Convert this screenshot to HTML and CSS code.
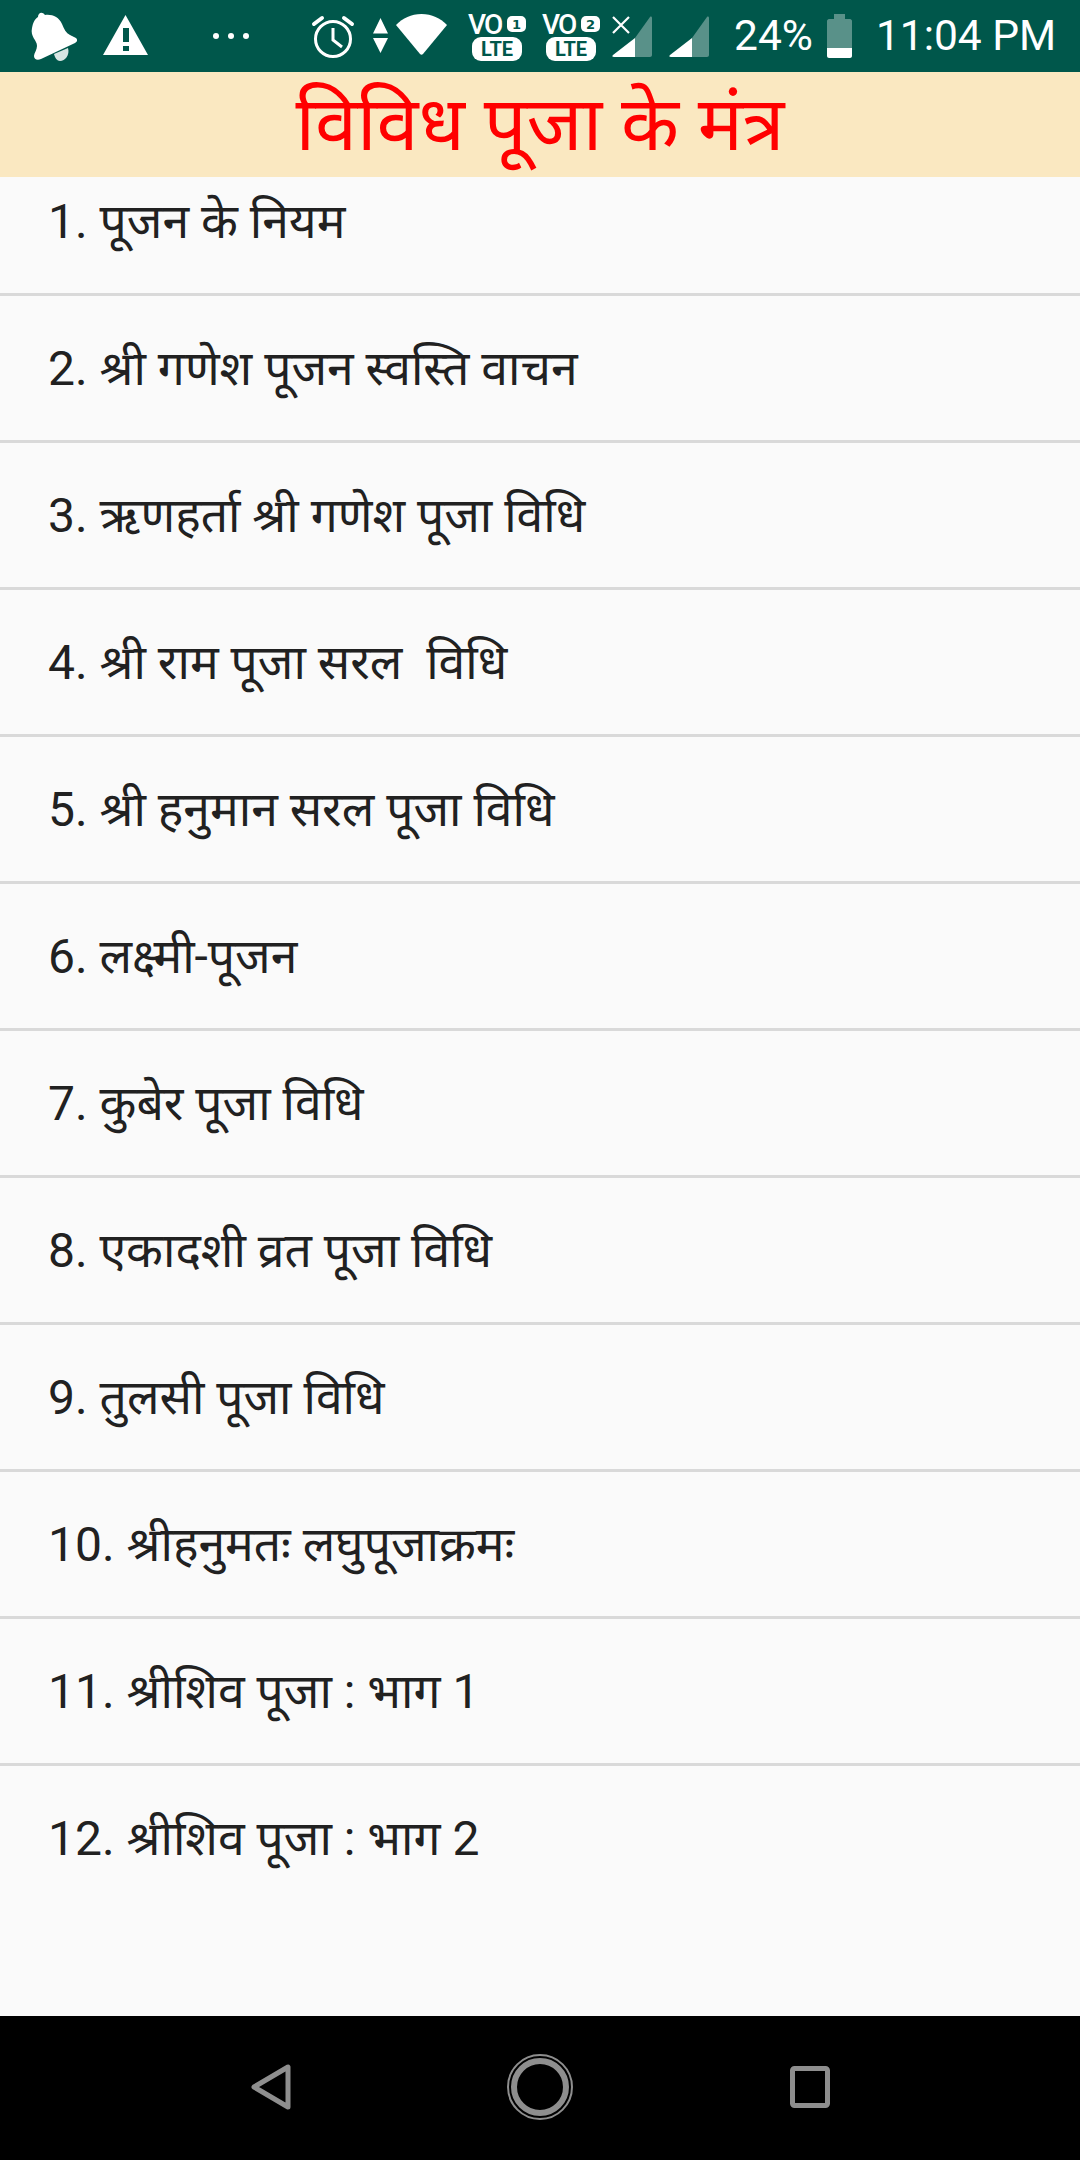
FILE: index.html
```html
<!DOCTYPE html>
<html lang="hi">
<head>
<meta charset="utf-8">
<title>विविध पूजा के मंत्र</title>
<link rel="stylesheet" href="styles.css">
</head>
<body>
<div class="phone">
  <div class="status">
    <svg class="ic bell" viewBox="0 0 47 51"><path fill="#fff" d="M2 18C3 12 5 9 8 7 8 3 12 1 15 5c7-1 14 2 17 9 2 5 4 9 8 11l6 3c2 2 1 4-1 5L11 49c-4 2-7 0-7-3 0-3 3-6 3-10 0-6-7-9-5-18z"/><path fill="#fff" opacity=".85" d="M24 44l14-6c2 7-3 13-8 13-3 0-5-3-6-7z"/></svg>
    <svg class="ic warn" viewBox="0 0 45 40"><path fill="#fff" fill-rule="evenodd" d="M22.500 0L45 40H0zM20 13v14h6V13zm0 18v5h6v-5z"/></svg>
    <svg class="ic dots" viewBox="0 0 36 6"><circle cx="3" cy="3" r="3" fill="#fff"/><circle cx="18" cy="3" r="3" fill="#fff"/><circle cx="33" cy="3" r="3" fill="#fff"/></svg>
    <svg class="ic alarm" viewBox="0 0 42 43"><circle cx="21" cy="24" r="17.500" fill="none" stroke="#fff" stroke-width="3"/><path fill="none" stroke="#fff" stroke-width="3" d="M21 13v12l9 7"/><path fill="none" stroke="#fff" stroke-width="4" stroke-linecap="round" d="M2 9l8-6M40 9l-8-6"/></svg>
    <svg class="ic arrows" viewBox="0 0 15 35"><path fill="#fff" d="M7.500 0L15 15.500H0zM0 20h15L7.500 35z"/></svg>
    <svg class="ic wifi" viewBox="0 0 51 41"><path fill="#fff" d="M0 11C7 4 15 0 25.500 0S44 4 51 11L27 40c-1 1-2 1-3 0z"/></svg>
    <svg class="ic vo vo1" viewBox="0 0 58 49"><text class="vot" x="0" y="21">VO</text><rect x="39" y="3" width="19" height="16" rx="5" fill="#fff"/><text class="von" x="48.500" y="16">1</text><rect x="4" y="24" width="50" height="24" rx="9" fill="#fff"/><text class="lte" x="29" y="43">LTE</text></svg>
    <svg class="ic vo vo2" viewBox="0 0 58 49"><text class="vot" x="0" y="21">VO</text><rect x="39" y="3" width="19" height="16" rx="5" fill="#fff"/><text class="von" x="48.500" y="16">2</text><rect x="4" y="24" width="50" height="24" rx="9" fill="#fff"/><text class="lte" x="29" y="43">LTE</text></svg>
    <svg class="ic sig sig1" viewBox="0 0 40 41"><path fill="#fff" opacity=".35" d="M23 22L38 1c1-1 2 0 2 1v37c0 1-1 2-2 2H23z"/><path fill="#fff" d="M23 22v19H2c-2 0-2-1-1-2z"/><path fill="none" stroke="#fff" stroke-width="2.200" d="M1 1l16 16M17 1L1 17"/></svg>
    <svg class="ic sig sig2" viewBox="0 0 40 41"><path fill="#fff" opacity=".35" d="M23 22L38 1c1-1 2 0 2 1v37c0 1-1 2-2 2H23z"/><path fill="#fff" d="M23 22v19H2c-2 0-2-1-1-2z"/></svg>
    <span class="pct">24%</span>
    <svg class="ic batt" viewBox="0 0 25 44"><path fill="#fff" opacity=".35" d="M7 0h11v5h5c1 0 2 1 2 2v27H0V7c0-1 1-2 2-2h5z"/><path fill="#fff" d="M0 34h25v8c0 1-1 2-2 2H2c-1 0-2-1-2-2z"/></svg>
    <span class="time">11:04 PM</span>
  </div>
  <header class="title"><h1>विविध पूजा के मंत्र</h1></header>
  <ul class="list">
    <li class="row first">1. पूजन के नियम</li>
    <li class="row">2. श्री गणेश पूजन स्वस्ति वाचन</li>
    <li class="row">3. ऋणहर्ता श्री गणेश पूजा विधि</li>
    <li class="row">4. श्री राम पूजा सरल &nbsp;विधि</li>
    <li class="row">5. श्री हनुमान सरल पूजा विधि</li>
    <li class="row">6. लक्ष्मी-पूजन</li>
    <li class="row">7. कुबेर पूजा विधि</li>
    <li class="row">8. एकादशी व्रत पूजा विधि</li>
    <li class="row">9. तुलसी पूजा विधि</li>
    <li class="row">10. श्रीहनुमतः लघुपूजाक्रमः</li>
    <li class="row">11. श्रीशिव पूजा : भाग 1</li>
    <li class="row last">12. श्रीशिव पूजा : भाग 2</li>
  </ul>
  <nav class="nav">
    <svg class="back" viewBox="0 0 40 46"><path fill="none" stroke="#8e8e8e" stroke-width="5" stroke-linejoin="round" d="M3 23L37 3v40z"/></svg>
    <svg class="home" viewBox="0 0 66 66"><circle cx="33" cy="33" r="32" fill="none" stroke="#8e8e8e" stroke-width="2"/><circle cx="33" cy="33" r="26" fill="none" stroke="#8e8e8e" stroke-width="6"/></svg>
    <svg class="recent" viewBox="0 0 40 42"><rect x="2.500" y="2.500" width="35" height="37" rx="2" fill="none" stroke="#8e8e8e" stroke-width="5"/></svg>
  </nav>
</div>
</body>
</html>
```

FILE: styles.css
```css
* { box-sizing: border-box; }
html, body { margin: 0; padding: 0; }
body { width: 1080px; height: 2160px; overflow: hidden; background: #fafafa; font-family: Roboto, "Noto Sans", "Noto Sans Devanagari", sans-serif; }
.phone { width: 1080px; height: 2160px; display: flex; flex-direction: column; }

.status { height: 72px; flex: none; background: #00574b; color: #fff; display: flex; align-items: flex-start; }
.ic { display: block; flex: none; overflow: visible; }
.bell { width: 47px; height: 51px; margin: 10px 0 0 30px; }
.warn { width: 45px; height: 40px; margin: 15px 0 0 26px; }
.dots { width: 36px; height: 6px; margin: 33px 0 0 65px; }
.alarm { width: 42px; height: 43px; margin: 15px 0 0 63px; }
.arrows { width: 15px; height: 35px; margin: 18px 0 0 19px; }
.wifi { width: 51px; height: 41px; margin: 14px 0 0 8px; }
.vo { width: 58px; height: 49px; margin-top: 13px; }
.vo1 { margin-left: 21px; }
.vo2 { margin-left: 16px; }
.sig { width: 40px; height: 41px; margin-top: 16px; }
.sig1 { margin-left: 12px; }
.sig2 { margin-left: 17px; }
.pct, .time { font-size: 42.500px; line-height: 72px; white-space: nowrap; }
.pct { margin-left: 25px; }
.batt { width: 25px; height: 44px; margin: 14px 0 0 14px; }
.time { margin-left: 24px; }
.vot { font: 500 28px Roboto, sans-serif; fill: #fff; letter-spacing: -2px; }
.von { font: 700 13px "DejaVu Sans", sans-serif; fill: #00574b; text-anchor: middle; }
.lte { font: 700 20px Roboto, sans-serif; fill: #00574b; text-anchor: middle; }

.title { height: 105px; flex: none; background: #fae8c1; display: flex; justify-content: center; align-items: center; }
.title h1 { margin: 0; font-size: 75.500px; font-weight: 400; color: #f00; line-height: 105px; white-space: nowrap; }

.list { flex: 1; margin: 0; padding: 0; list-style: none; background: #fafafa; }
.row { height: 147px; padding: 46px 0 0 48px; border-bottom: 3px solid #d9d9d9; font-size: 48px; line-height: 54px; color: #212121; white-space: nowrap; }
.row.first { height: 119px; padding-top: 18px; }
.row.last { border-bottom: 0; }

.nav { height: 144px; flex: none; background: #000; display: flex; align-items: center; padding-bottom: 2px; }
.back { width: 40px; height: 46px; margin-left: 251px; }
.home { width: 66px; height: 66px; margin-left: 216px; }
.recent { width: 40px; height: 42px; margin-left: 217px; }
```
